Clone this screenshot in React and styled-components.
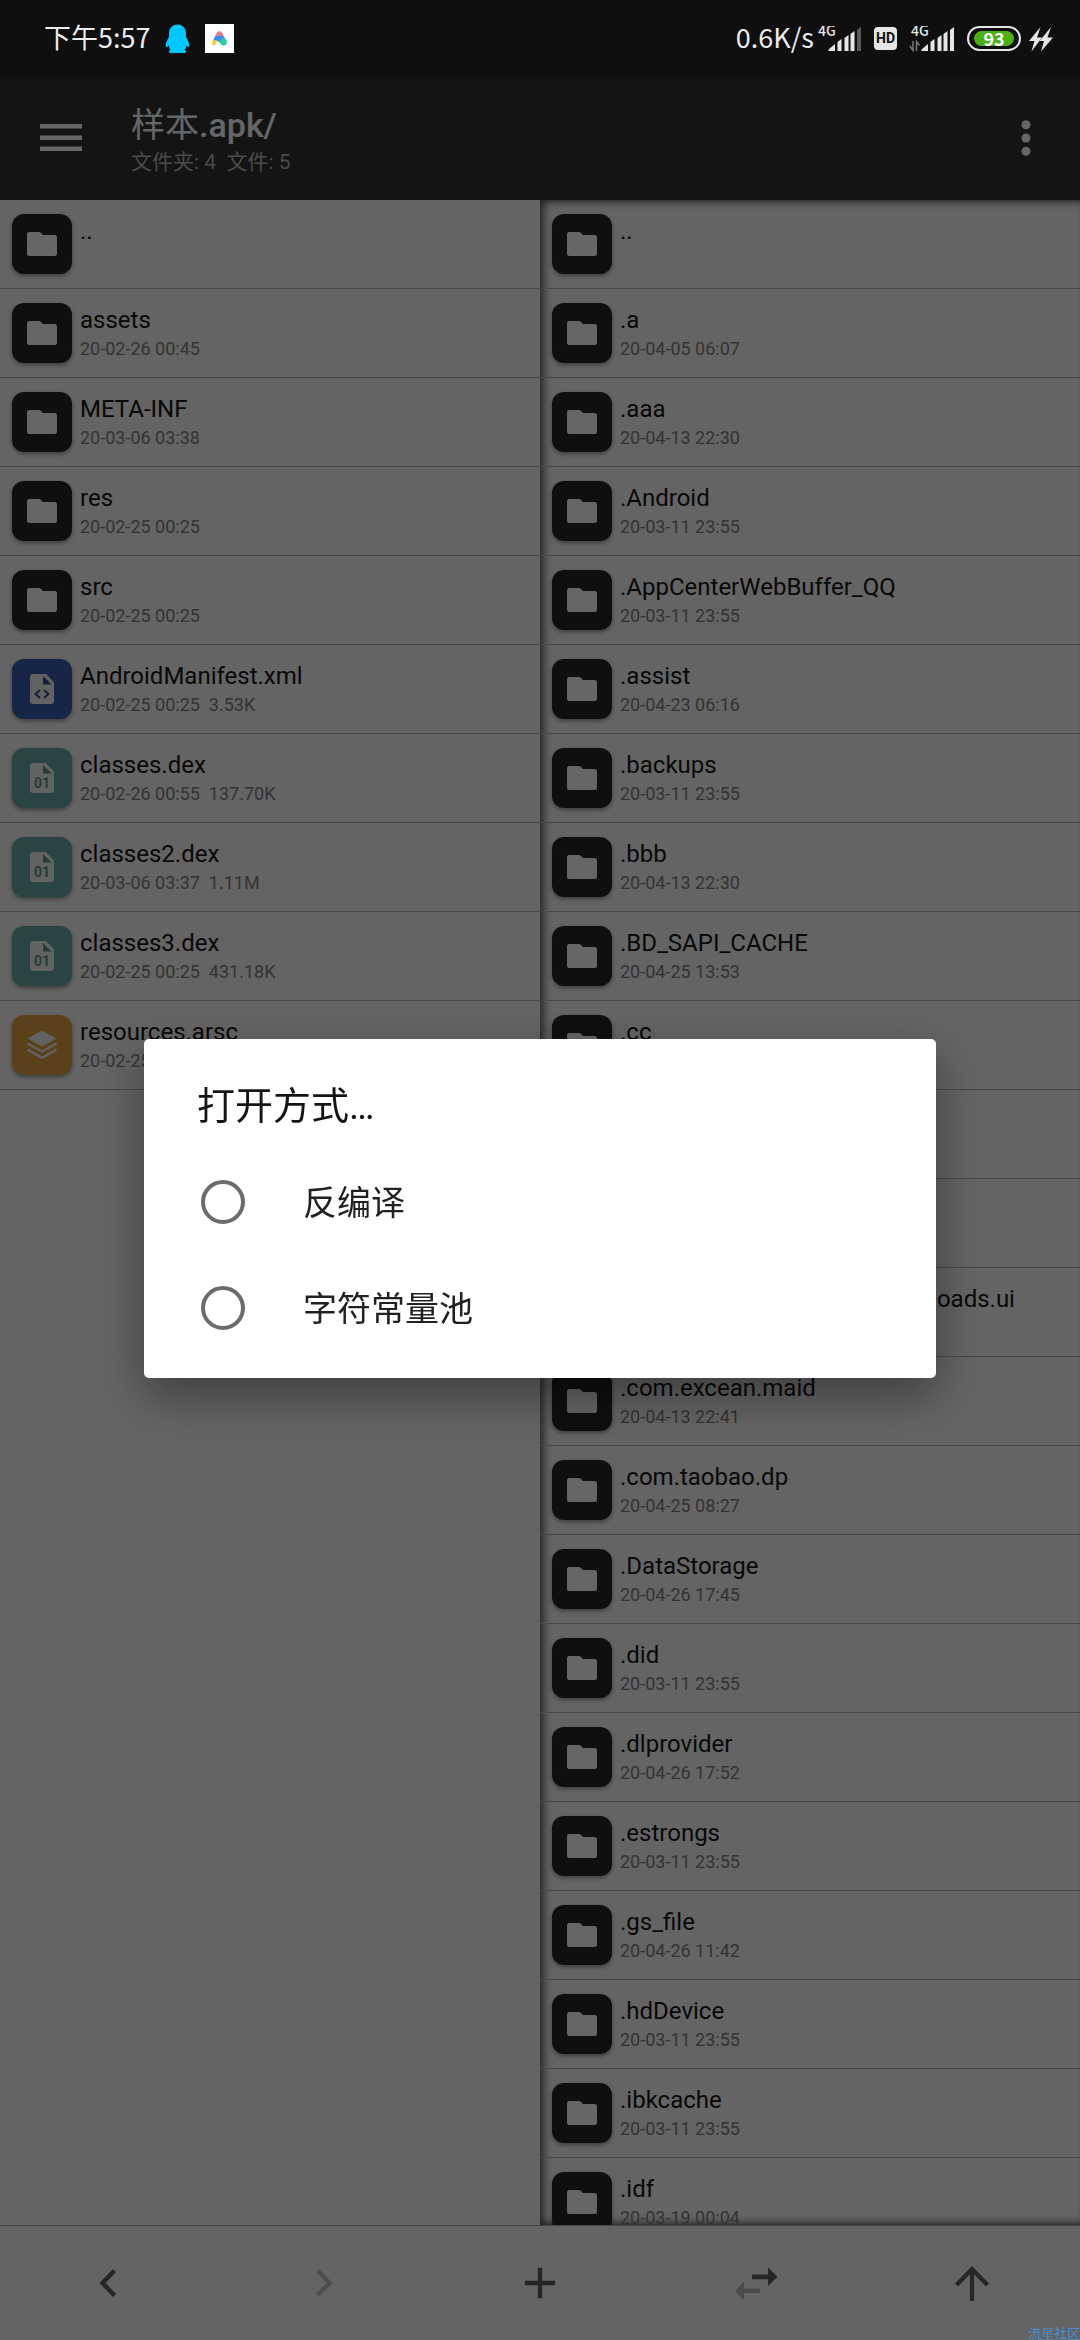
import React, { useState } from 'react';
import styled, { createGlobalStyle } from 'styled-components';

const GlobalStyle = createGlobalStyle`
  * {
    box-sizing: border-box;
  }

  body {
    margin: 0;
    background: #fafafa;
    font-family: Roboto, "Noto Sans CJK SC", sans-serif;
  }

  button {
    border: 0;
    padding: 0;
    background: none;
    font: inherit;
    color: inherit;
    text-align: left;
  }
`;

const Screen = styled.div`
  display: flex;
  flex-direction: column;
  height: 100vh;
  overflow: hidden;
  background: #fafafa;
`;

/* status bar stays bright above the dialog scrim */
const StatusBar = styled.header`
  position: relative;
  z-index: 3;
  display: flex;
  flex: none;
  align-items: center;
  justify-content: space-between;
  height: 77px;
  padding: 0 27px 0 44px;
  background: #0f0f0f;
  color: #ececec;
  font-family: "Noto Sans CJK SC", sans-serif;
  font-size: 27px;
  line-height: 40px;
`;

const StatusGroup = styled.div`
  display: flex;
  align-items: center;
  gap: ${props => props.$gap}px;
`;

const StatusText = styled.span`
  padding-bottom: 4px;
  white-space: pre;
`;

const HdBadge = styled.span`
  width: 23px;
  height: 23px;
  border-radius: 4px;
  background: #e6e6e6;
  color: #0f0f0f;
  font-family: Roboto, sans-serif;
  font-size: 14px;
  font-weight: 700;
  line-height: 23px;
  text-align: center;
`;

const Battery = styled.div`
  width: 54px;
  height: 25px;
  padding: 3px 5px;
  border: 2px solid #e6e6e6;
  border-radius: 13px;
`;

const BatteryLevel = styled.div`
  height: 15px;
  border-radius: 8px;
  background: #4caf12;
  color: #fff;
  font-size: 18px;
  font-weight: 700;
  line-height: 14px;
  text-align: center;
`;

const AppBar = styled.div`
  display: flex;
  flex: none;
  align-items: center;
  height: 123px;
  padding: 0 30px 2px;
  background: #323232;
  color: #fff;
`;

const BarButton = styled.button`
  display: flex;
  align-items: center;
  justify-content: center;
  width: 62px;
  height: 80px;
`;

const Titles = styled.div`
  flex: 1;
  padding: 4px 0 0 39px;
`;

const PathTitle = styled.h1`
  margin: 0;
  font-size: 34px;
  font-weight: 400;
  line-height: 44px;
`;

const PathLatin = styled.span`
  font-weight: 500;
`;

const Summary = styled.p`
  margin: 0;
  color: #b8b8b8;
  font-size: 21px;
  line-height: 30px;
  white-space: pre;
`;

const Panes = styled.main`
  display: flex;
  flex: 1;
  min-height: 0;
`;

const Pane = styled.section`
  flex: 1;
  min-width: 0;
  overflow: hidden;
  box-shadow: ${props => (props.$active ? 'inset 9px 0 9px -5px rgba(0, 0, 0, 0.6), inset 0 9px 9px -7px rgba(0, 0, 0, 0.6), inset 0 -9px 9px -7px rgba(0, 0, 0, 0.6)' : 'none')};
`;

const FileList = styled.ul`
  margin: 0;
  padding: 0;
  list-style: none;
`;

const FileRow = styled.button`
  display: flex;
  align-items: center;
  gap: 8px;
  width: 100%;
  height: 89px;
  padding: 0 12px;
  border-bottom: 1px solid #b4b4b4;
`;

const Tile = styled.span`
  flex: none;
  width: 60px;
  height: 60px;
  overflow: hidden;
  border-radius: 12px;
  background: ${props => props.$color};
  box-shadow: 0 2px 4px rgba(0, 0, 0, 0.4);
`;

const FileText = styled.span`
  display: flex;
  flex-direction: column;
  gap: 4px;
  min-width: 0;
`;

const FileName = styled.span`
  color: #151515;
  font-size: 24px;
  line-height: 28px;
  white-space: nowrap;
`;

const FileInfo = styled.span`
  min-height: 22px;
  color: #818181;
  font-size: 18px;
  line-height: 22px;
  white-space: pre;
`;

const BottomBar = styled.nav`
  display: flex;
  flex: none;
  height: 115px;
  border-top: 1px solid #a8a8a8;
`;

const NavButton = styled.button`
  display: flex;
  flex: 1;
  align-items: center;
  justify-content: center;
  color: #5f5f5f;

  &:disabled {
    color: #c0c0c0;
  }
`;

const Scrim = styled.div`
  position: fixed;
  inset: 0;
  z-index: 2;
  display: flex;
  align-items: center;
  justify-content: center;
  padding: 77px 144px 0;
  background: rgba(0, 0, 0, 0.6);
`;

const Dialog = styled.div`
  width: 100%;
  padding: 39px 0 17px;
  border-radius: 5px;
  background: #fff;
  box-shadow: 0 18px 48px rgba(0, 0, 0, 0.4);
`;

const DialogTitle = styled.h2`
  margin: 0 53px 15px;
  color: #141414;
  font-size: 38px;
  font-weight: 400;
  line-height: 56px;
`;

const Option = styled.label`
  display: flex;
  align-items: center;
  gap: 58px;
  height: 106px;
  padding: 0 57px;
  color: #212121;
  font-size: 34px;
`;

const OptionText = styled.span`
  padding-bottom: 4px;
`;

const Radio = styled.input`
  appearance: none;
  width: 44px;
  height: 44px;
  margin: 0;
  border: 4px solid #6c6c6c;
  border-radius: 50%;

  &:checked {
    box-shadow: inset 0 0 0 8px #fff;
    background: #6c6c6c;
  }
`;

const Watermark = styled.span`
  position: fixed;
  right: 0;
  bottom: 0;
  z-index: 3;
  color: #4a8fd6;
  font-family: "Noto Sans CJK SC", sans-serif;
  font-size: 13px;
  line-height: 14px;
`;

const FolderGlyph = () => (
  <svg width="60" height="60" viewBox="0 0 60 60">
    <path fill="#fff" d="M17.5 18H27a2 2 0 0 1 1.5.6L31 21h11.5a2.5 2.5 0 0 1 2.5 2.5v16a2.5 2.5 0 0 1-2.5 2.5h-25a2.5 2.5 0 0 1-2.5-2.5v-19a2.5 2.5 0 0 1 2.5-2.5z" />
  </svg>
);

const PageShape = ({ color }) => (
  <>
    <path fill="#f4f4f4" d="M21 15h13l8 8.500V42a3 3 0 0 1-3 3H21a3 3 0 0 1-3-3V18a3 3 0 0 1 3-3z" />
    <path fill={color} d="M31 17v8.600h8.600z" />
  </>
);

const XmlGlyph = () => (
  <svg width="60" height="60" viewBox="0 0 60 60">
    <PageShape color="#324f96" />
    <path fill="none" stroke="#324f96" strokeWidth="2" d="M28 31l-4.500 4 4.500 4M32 31l4.500 4-4.500 4" />
  </svg>
);

const DexGlyph = () => (
  <svg width="60" height="60" viewBox="0 0 60 60">
    <PageShape color="#5f9793" />
    <text x="30" y="40" textAnchor="middle" fill="#5f9793" fontFamily="Roboto, sans-serif" fontSize="14" fontWeight="700">01</text>
  </svg>
);

const LayersGlyph = () => (
  <svg width="60" height="60" viewBox="0 0 60 60">
    <path fill="#f4f4f4" d="M30 15.500L44.500 23.500 30 31.500 15.500 23.500z" />
    <path fill="none" stroke="#f4f4f4" strokeWidth="2.400" d="M15.500 28.500L30 36.500 44.500 28.500M15.500 34.500L30 42.800 44.500 34.500" />
  </svg>
);

const kinds = {
  folder: { color: '#262626', Glyph: FolderGlyph },
  xml: { color: '#3a5db0', Glyph: XmlGlyph },
  dex: { color: '#68aaa5', Glyph: DexGlyph },
  arsc: { color: '#e0a440', Glyph: LayersGlyph },
};

const leftFiles = [
  ['..', ''],
  ['assets', '20-02-26 00:45'],
  ['META-INF', '20-03-06 03:38'],
  ['res', '20-02-25 00:25'],
  ['src', '20-02-25 00:25'],
  ['AndroidManifest.xml', '20-02-25 00:25  3.53K', 'xml'],
  ['classes.dex', '20-02-26 00:55  137.70K', 'dex'],
  ['classes2.dex', '20-03-06 03:37  1.11M', 'dex'],
  ['classes3.dex', '20-02-25 00:25  431.18K', 'dex'],
  ['resources.arsc', '20-02-25 00:25', 'arsc'],
];

const rightFiles = [
  ['..', ''],
  ['.a', '20-04-05 06:07'],
  ['.aaa', '20-04-13 22:30'],
  ['.Android', '20-03-11 23:55'],
  ['.AppCenterWebBuffer_QQ', '20-03-11 23:55'],
  ['.assist', '20-04-23 06:16'],
  ['.backups', '20-03-11 23:55'],
  ['.bbb', '20-04-13 22:30'],
  ['.BD_SAPI_CACHE', '20-04-25 13:53'],
  ['.cc', ''],
  ['', ''],
  ['', ''],
  ['.com.android.providers.downloads.ui', ''],
  ['.com.excean.maid', '20-04-13 22:41'],
  ['.com.taobao.dp', '20-04-25 08:27'],
  ['.DataStorage', '20-04-26 17:45'],
  ['.did', '20-03-11 23:55'],
  ['.dlprovider', '20-04-26 17:52'],
  ['.estrongs', '20-03-11 23:55'],
  ['.gs_file', '20-04-26 11:42'],
  ['.hdDevice', '20-03-11 23:55'],
  ['.ibkcache', '20-03-11 23:55'],
  ['.idf', '20-03-19 00:04'],
];

const Files = ({ files }) => (
  <FileList>
    {files.map(([name, info, kind = 'folder'], index) => {
      const { color, Glyph } = kinds[kind];
      return (
        <li key={index}>
          <FileRow type="button">
            <Tile $color={color}><Glyph /></Tile>
            <FileText>
              <FileName>{name}</FileName>
              <FileInfo>{info}</FileInfo>
            </FileText>
          </FileRow>
        </li>
      );
    })}
  </FileList>
);

const SignalIcon = ({ full, data }) => (
  <svg width="46" height="26" viewBox="0 0 46 26" fill="#e6e6e6">
    <text x="2" y="10" fontFamily="Noto Sans CJK SC, sans-serif" fontSize="14" fontWeight="500">4G</text>
    <path d="M12.500 25v-1.500l6.500-5.500v7z" />
    <path d="M21.500 25V16l4-3v12z" />
    <path d="M28.500 25V12l4-3v16z" />
    <path d="M34.500 25V8l4-3v20z" />
    <path d="M41 25V4l4-3v24z" fill={full ? '#e6e6e6' : '#5a5a5a'} />
    {data && <path d="M4 15v9.500L1 20M7.500 25V15.500l3 4" fill="none" stroke="#777" strokeWidth="1.500" />}
  </svg>
);

const QQIcon = () => (
  <svg width="25" height="30" viewBox="0 0 25 30">
    <path fill="#00c8ff" d="M12.500 0.500C17.500 0.500 21 4 21 9.500v3.200c1.600 2.800 3.500 6.500 3.300 9.300-.1 1.500-1.300 1.500-2.800-.5-.3 1.800-1 3.200-2 4.400 1.300.5 1.800 1.100 1.700 1.900-.2 1-1.400 1.200-2.700 1.200h-12c-1.300 0-2.500-.2-2.700-1.200-.1-.8.400-1.400 1.700-1.900-1-1.200-1.700-2.600-2-4.400C2 23.500.8 23.500.7 22 .5 19.200 2.400 15.500 4 12.700V9.500C4 4 7.500.5 12.500.5z" />
  </svg>
);

const AppIcon = () => (
  <svg width="29" height="29" viewBox="0 0 29 29">
    <rect width="29" height="29" fill="#fff" />
    <path fill="#f0788c" d="M12 8.500a3 3 0 0 1 5 0l2.200 4.500h-9.400z" />
    <path fill="#3f8ee8" d="M9.800 12.500c3-1.500 6.500-1.200 9.600.8l2 4.200-5.500 1.500-4.500-2.500-3.500.500z" />
    <path fill="#f2d040" d="M7.800 16.800c2-1 4-.5 4.500.3l-1.800 3.400c-1.600 1.500-3.800.5-3.700-1.500z" />
    <circle cx="18.500" cy="18" r="3.400" fill="#20d0a8" />
  </svg>
);

const ChargeIcon = () => (
  <svg width="24" height="26" viewBox="0 0 24 26" fill="#e6e6e6">
    <path d="M11.500 1L0 15h5.500L2.500 25.500 13 11.500H8z" />
    <path d="M22 1L10.500 15H15l-3 10.500L24 11.500h-5.500z" />
  </svg>
);

const App = () => {
  const [choice, setChoice] = useState('');

  return (
    <Screen>
      <GlobalStyle />
      <StatusBar>
        <StatusGroup $gap={15}>
          <StatusText>下午5:57</StatusText>
          <QQIcon />
          <AppIcon />
        </StatusGroup>
        <StatusGroup $gap={12}>
          <StatusGroup $gap={2}>
            <StatusText>0.6K/s</StatusText>
            <SignalIcon />
          </StatusGroup>
          <HdBadge>HD</HdBadge>
          <SignalIcon full data />
          <StatusGroup $gap={8}>
            <Battery><BatteryLevel>93</BatteryLevel></Battery>
            <ChargeIcon />
          </StatusGroup>
        </StatusGroup>
      </StatusBar>

      <AppBar>
        <BarButton type="button" aria-label="菜单">
          <svg width="42" height="27" viewBox="0 0 42 27" fill="#fff">
            <path d="M0 0h42v4.500H0zM0 11.500h42V16H0zM0 22.500h42V27H0z" />
          </svg>
        </BarButton>
        <Titles>
          <PathTitle>样本<PathLatin>.apk/</PathLatin></PathTitle>
          <Summary>{'文件夹: 4  文件: 5'}</Summary>
        </Titles>
        <BarButton type="button" aria-label="更多">
          <svg width="46" height="36" viewBox="0 0 46 36" fill="#fff">
            <circle cx="30" cy="4.700" r="4.500" />
            <circle cx="30" cy="18" r="4.500" />
            <circle cx="30" cy="31.300" r="4.500" />
          </svg>
        </BarButton>
      </AppBar>

      <Panes>
        <Pane><Files files={leftFiles} /></Pane>
        <Pane $active><Files files={rightFiles} /></Pane>
      </Panes>

      <BottomBar>
        <NavButton type="button" aria-label="后退">
          <svg width="48" height="48" viewBox="0 0 48 48" fill="none" stroke="currentColor" strokeWidth="4.400">
            <path d="M30.500 11.500L18.500 24l12 12.500" />
          </svg>
        </NavButton>
        <NavButton type="button" aria-label="前进" disabled>
          <svg width="48" height="48" viewBox="0 0 48 48" fill="none" stroke="currentColor" strokeWidth="4.400">
            <path d="M17.500 11.500L29.500 24l-12 12.500" />
          </svg>
        </NavButton>
        <NavButton type="button" aria-label="新建">
          <svg width="48" height="48" viewBox="0 0 48 48" fill="currentColor">
            <path d="M21.800 8.800h4.400v13h13v4.400h-13v13h-4.400v-13h-13v-4.400h13z" />
          </svg>
        </NavButton>
        <NavButton type="button" aria-label="交换">
          <svg width="48" height="48" viewBox="0 0 48 48" fill="currentColor">
            <path d="M20 15.500h16V8.500l9.500 9.200L36 27v-6.800H20z" />
            <path fill="#b8b8b8" d="M28 29.500H12v-7L3 32l9 9.200v-7.200h16z" />
          </svg>
        </NavButton>
        <NavButton type="button" aria-label="上级目录">
          <svg width="48" height="48" viewBox="0 0 48 48" fill="none" stroke="currentColor" strokeWidth="4.200">
            <path d="M24 42V10M8.500 26L24 10l15.500 16" />
          </svg>
        </NavButton>
      </BottomBar>

      <Scrim>
        <Dialog role="dialog" aria-labelledby="open-with">
          <DialogTitle id="open-with">打开方式…</DialogTitle>
          {['反编译', '字符常量池'].map(name => (
            <Option key={name}>
              <Radio type="radio" name="mode" checked={choice === name} onChange={() => setChoice(name)} />
              <OptionText>{name}</OptionText>
            </Option>
          ))}
        </Dialog>
      </Scrim>
      <Watermark>流星社区</Watermark>
    </Screen>
  );
};

export default App;
